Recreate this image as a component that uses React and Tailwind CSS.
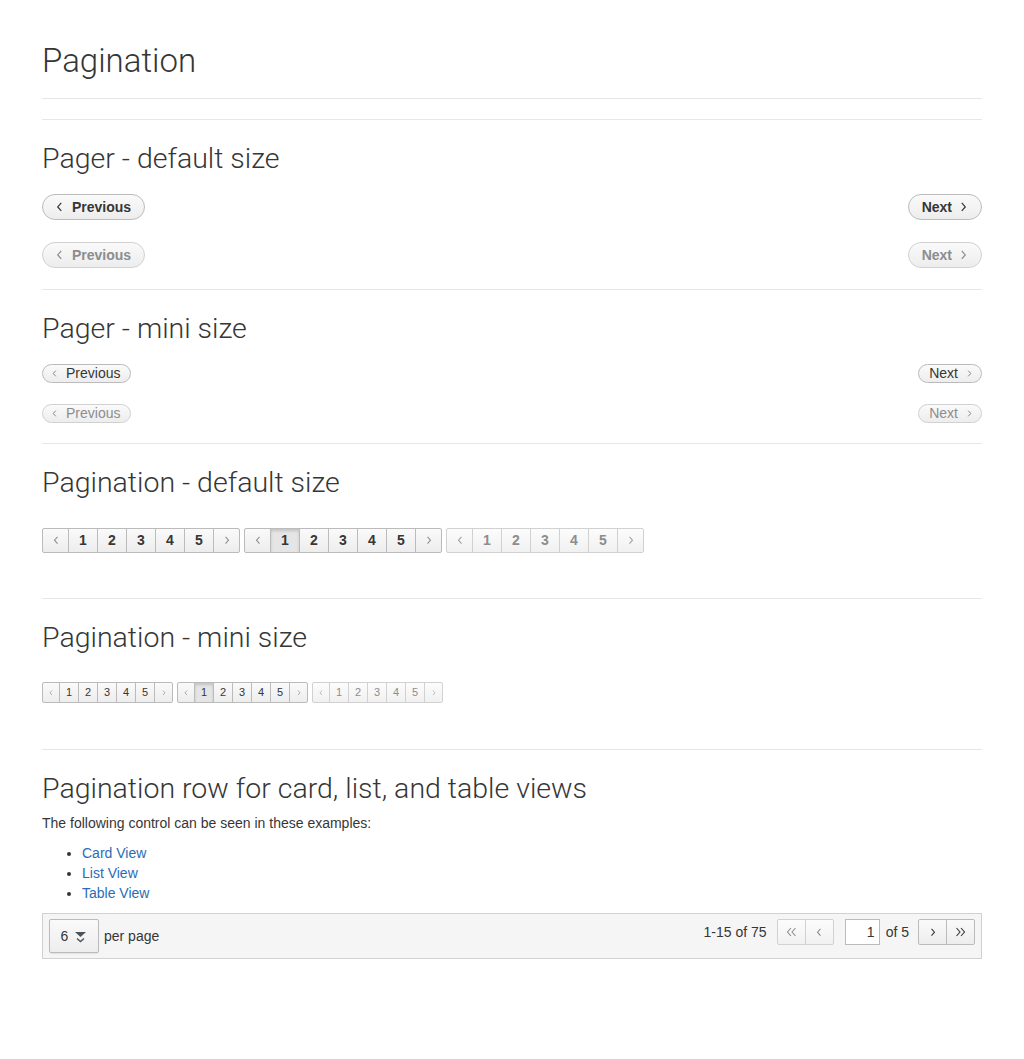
import { Fragment } from 'react'

const Chev = ({ dir = 'left', size = 8, className = '' }) => (
  <svg width={size} height={size * 1.4} viewBox="0 0 8 11" className={className} fill="none" stroke="currentColor" strokeWidth="1.4">
    {dir === 'left' ? <polyline points="6,1 2,5.5 6,10" /> : <polyline points="2,1 6,5.5 2,10" />}
  </svg>
)

const DoubleChev = ({ dir = 'left' }) => (
  <svg width="11" height="10" viewBox="0 0 11 10" fill="none" stroke="currentColor" strokeWidth="1.1">
    {dir === 'left' ? (
      <>
        <polyline points="5,1 1.5,5 5,9" />
        <polyline points="9.5,1 6,5 9.5,9" />
      </>
    ) : (
      <>
        <polyline points="1.5,1 5,5 1.5,9" />
        <polyline points="6,1 9.5,5 6,9" />
      </>
    )}
  </svg>
)

const SortCaret = () => (
  <svg width="13" height="13" viewBox="0 0 13 13" fill="none">
    <path d="M1 2 L12 2 L6.5 7 Z" fill="#4d5258" />
    <polyline points="3,8.5 6.5,11.5 10,8.5" stroke="#4d5258" strokeWidth="1.4" />
  </svg>
)

const Section = ({ title, children, className = '' }) => (
  <section className={`border-t border-[#e7e7e7] ${className}`}>
    <h2 className="font-['Roboto','Helvetica_Neue',sans-serif] font-light text-[28.5px] leading-[32px] text-[#363636] mt-[23px]">{title}</h2>
    {children}
  </section>
)

const PagerBtn = ({ children, disabled, mini }) => (
  <span
    className={`inline-flex items-center rounded-full border bg-gradient-to-b from-[#fafafa] to-[#ededed] ${
      mini ? 'h-[19px] text-[14px] font-normal' : 'h-[26px] text-[14px] font-bold'
    } ${disabled ? 'border-[#d1d1d1] text-[#8b8d8f]' : 'border-[#bbbbbb] text-[#363636]'}`}
  >
    {children}
  </span>
)

const PagerRow = ({ disabled, mini }) => (
  <div className="flex justify-between">
    <PagerBtn disabled={disabled} mini={mini}>
      {mini ? (
        <span className="flex items-center pl-[9px] pr-[10px] gap-[9px]"><Chev dir="left" size={5} className="text-[#72767b]" />Previous</span>
      ) : (
        <span className="flex items-center pl-[13px] pr-[13px] gap-[9px]"><Chev dir="left" size={7} />Previous</span>
      )}
    </PagerBtn>
    <PagerBtn disabled={disabled} mini={mini}>
      {mini ? (
        <span className="flex items-center pl-[10px] pr-[9px] gap-[9px]">Next<Chev dir="right" size={5} className="text-[#72767b]" /></span>
      ) : (
        <span className="flex items-center pl-[13px] pr-[14px] gap-[8px]">Next<Chev dir="right" size={7} /></span>
      )}
    </PagerBtn>
  </div>
)

const PageGroup = ({ mini, activeFirst, disabled }) => {
  const cells = ['prev', 1, 2, 3, 4, 5, 'next']
  return (
    <div className={`inline-flex rounded-[2px] ${mini ? 'h-[21px]' : 'h-[25px]'}`}>
      {cells.map((c, i) => {
        const isChev = typeof c === 'string'
        const active = activeFirst && c === 1
        const width = mini ? (c === 'prev' ? 'w-[18px]' : c === 'next' ? 'w-[19px]' : 'w-[20px]') : isChev ? 'w-[27px]' : 'w-[30px]'
        const base = active
          ? 'bg-[#e5e5e5] shadow-[inset_0_2px_3px_rgba(0,0,0,0.15)] border-[#bbbbbb]'
          : disabled
          ? 'bg-gradient-to-b from-[#fcfcfc] to-[#f1f1f1] border-[#d1d1d1]'
          : 'bg-gradient-to-b from-[#fafafa] to-[#ededed] border-[#bbbbbb]'
        const color = disabled
          ? isChev ? 'text-[#a0a0a0]' : 'text-[#8b8d8f]'
          : isChev ? 'text-[#8b8d8f]' : 'text-[#363636]'
        return (
          <span
            key={i}
            className={`flex items-center justify-center border ${width} ${base} ${color} ${i > 0 ? '-ml-px' : ''} ${
              i === 0 ? 'rounded-l-[2px]' : ''
            } ${i === 6 ? 'rounded-r-[2px]' : ''} ${mini ? 'text-[11px] font-normal' : 'text-[14px] font-bold'}`}
          >
            {c === 'prev' ? <Chev dir="left" size={mini ? 4 : 6} /> : c === 'next' ? <Chev dir="right" size={mini ? 4 : 6} /> : c}
          </span>
        )
      })}
    </div>
  )
}

export default function App() {
  return (
    <div className="min-h-[1059px] bg-white font-['Liberation_Sans',Arial,sans-serif] text-[14px] text-[#363636]">
      <div className="w-[940px] mx-auto pt-[41px]">
        <h1 className="font-['Roboto','Helvetica_Neue',sans-serif] font-light text-[33px] leading-[40px] text-[#363636] pb-[17px] border-b border-[#e7e7e7] mb-[20px]">
          Pagination
        </h1>

        <Section title="Pager - default size">
          <div className="mt-[19px] flex flex-col gap-[22px] pb-[21px]">
            <PagerRow />
            <PagerRow disabled />
          </div>
        </Section>

        <Section title="Pager - mini size">
          <div className="mt-[19px] flex flex-col gap-[21px] pb-[20px]">
            <PagerRow mini />
            <PagerRow mini disabled />
          </div>
        </Section>

        <Section title="Pagination - default size">
          <div className="mt-[29px] flex gap-[4px] pb-[45px]">
            <PageGroup />
            <PageGroup activeFirst />
            <PageGroup disabled />
          </div>
        </Section>

        <Section title="Pagination - mini size">
          <div className="mt-[28px] flex gap-[4px] pb-[46px]">
            <PageGroup mini />
            <PageGroup mini activeFirst />
            <PageGroup mini disabled />
          </div>
        </Section>

        <Section title="Pagination row for card, list, and table views">
          <p className="mt-[8px] leading-[20px]">The following control can be seen in these examples:</p>
          <ul className="mt-[10px] pl-[40px] list-disc leading-[20px]">
            {['Card View', 'List View', 'Table View'].map((t) => (
              <li key={t}>
                <a className="text-[#2b6cb6]" href="#">{t}</a>
              </li>
            ))}
          </ul>
          <div className="mt-[10px] h-[46px] bg-[#f5f5f5] border border-[#d1d1d1] flex justify-between px-[6px] pt-[5px]">
            <div className="flex items-center h-[34px]">
              <span className="h-[34px] w-[50px] flex items-center justify-center gap-[6px] rounded-[2px] border border-[#bbbbbb] bg-gradient-to-b from-[#fafafa] to-[#ededed] shadow-[0_1px_1px_rgba(3,3,3,0.08)]">
                <span>6</span>
                <SortCaret />
              </span>
              <span className="ml-[5px]">per page</span>
            </div>
            <div className="flex items-start h-[26px] pr-[0px]">
              <span className="h-[26px] flex items-center">1-15 of 75</span>
              <div className="flex ml-[10px] text-[#8b8d8f]">
                <span className="w-[29px] h-[26px] flex items-center justify-center border border-[#d1d1d1] rounded-l-[2px] bg-gradient-to-b from-[#fcfcfc] to-[#f1f1f1]"><DoubleChev dir="left" /></span>
                <span className="-ml-px w-[29px] h-[26px] flex items-center justify-center border border-[#d1d1d1] rounded-r-[2px] bg-gradient-to-b from-[#fcfcfc] to-[#f1f1f1]"><Chev dir="left" size={6} /></span>
              </div>
              <span className="ml-[11px] w-[35px] h-[26px] border border-[#bbbbbb] bg-white flex items-center justify-end pr-[4px]">1</span>
              <span className="ml-[6px] h-[26px] flex items-center">of 5</span>
              <div className="flex ml-[9px] text-[#363636]">
                <span className="w-[29px] h-[26px] flex items-center justify-center border border-[#bbbbbb] rounded-l-[2px] bg-gradient-to-b from-[#fafafa] to-[#ededed]"><Chev dir="right" size={6} /></span>
                <span className="-ml-px w-[29px] h-[26px] flex items-center justify-center border border-[#bbbbbb] rounded-r-[2px] bg-gradient-to-b from-[#fafafa] to-[#ededed]"><DoubleChev dir="right" /></span>
              </div>
            </div>
          </div>
        </Section>
      </div>
    </div>
  )
}
